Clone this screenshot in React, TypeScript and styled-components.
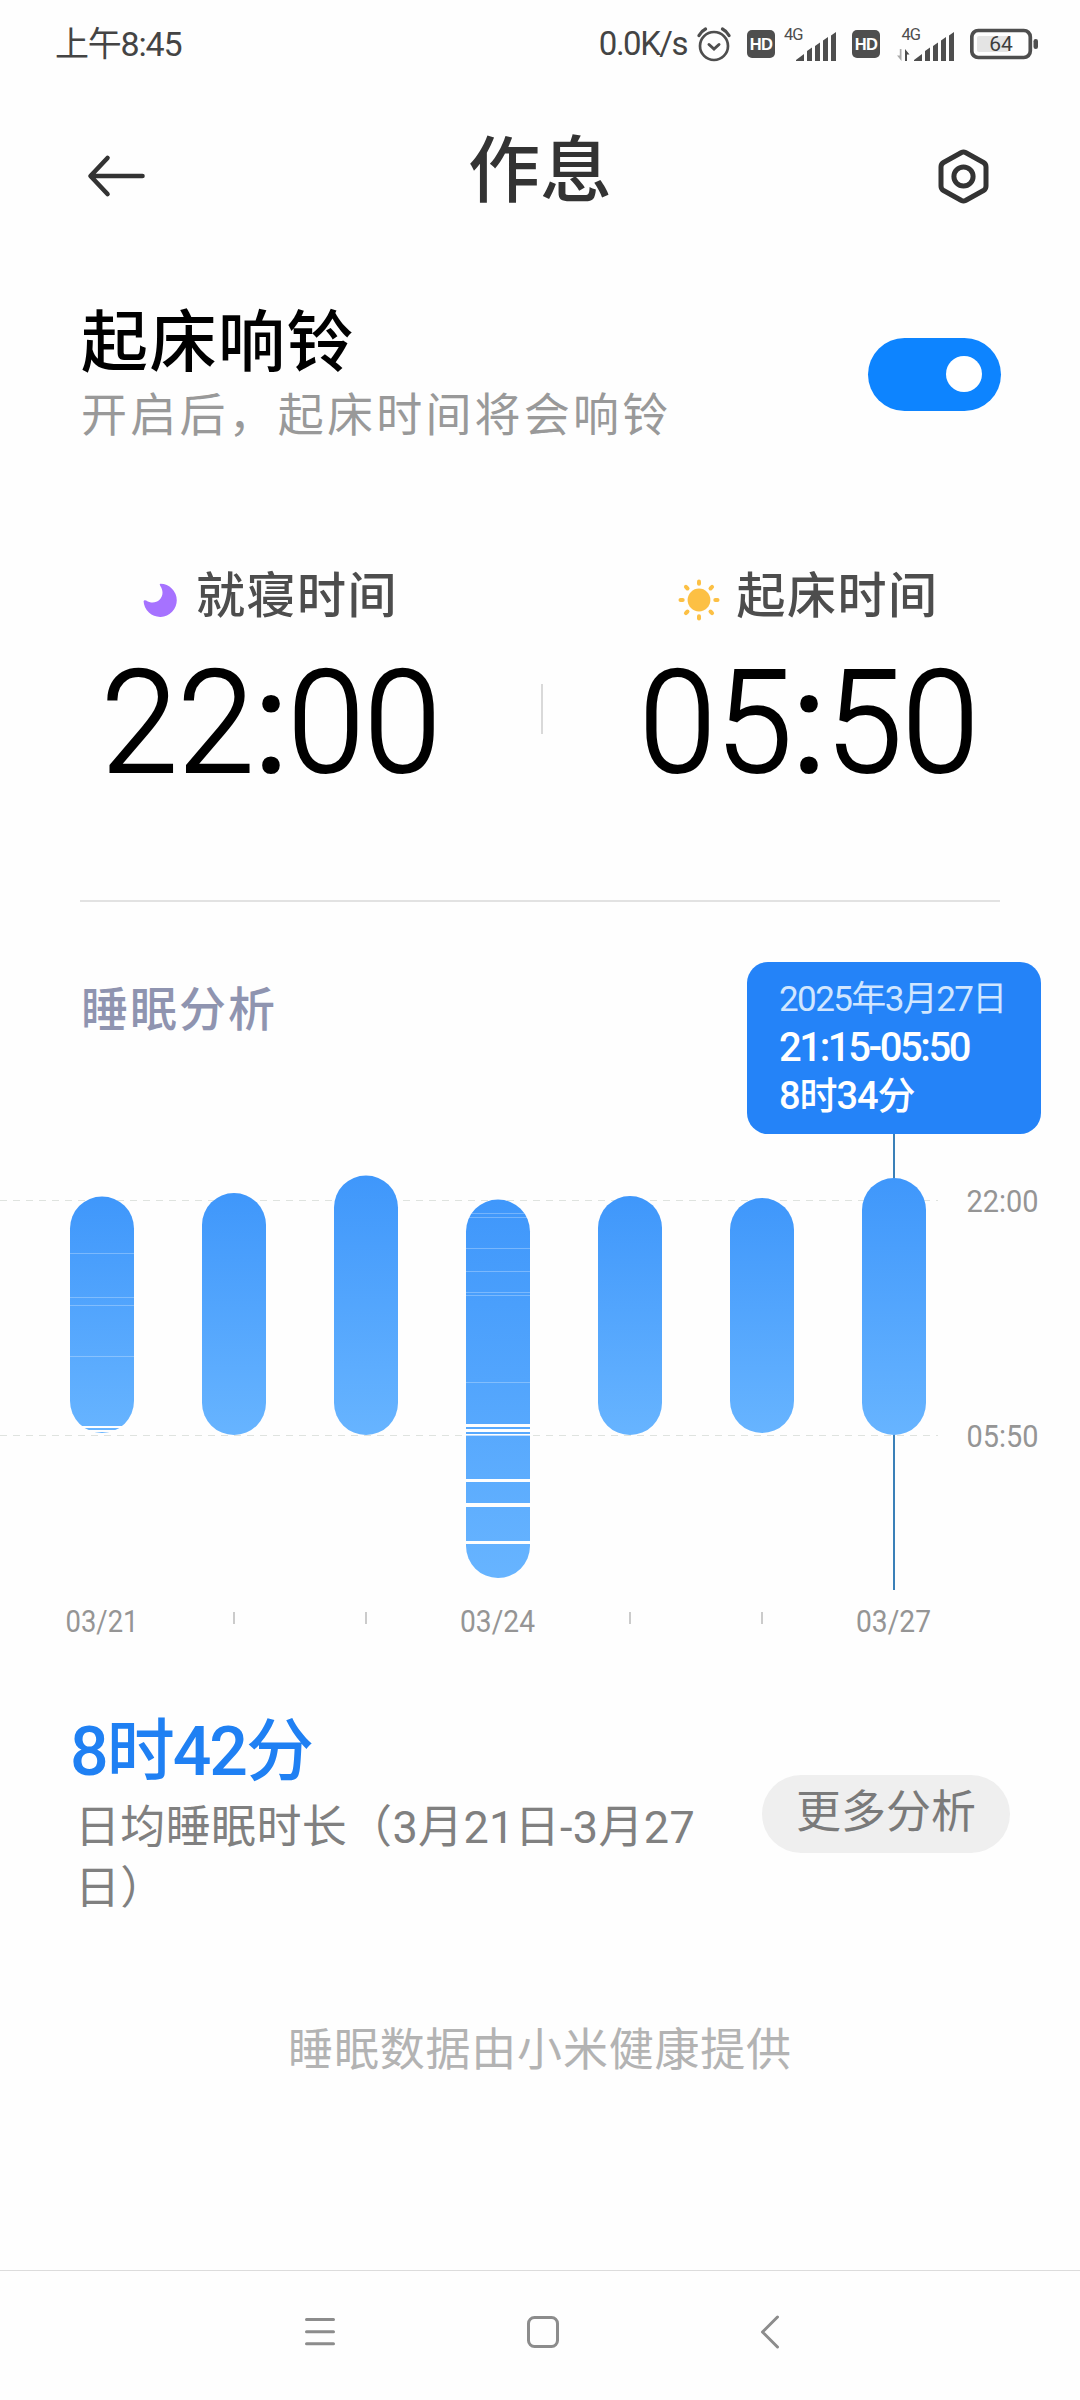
import React from "react";
import styled, { createGlobalStyle } from "styled-components";

const FONT = `Roboto, "Noto Sans CJK SC", sans-serif`;

const GlobalStyle = createGlobalStyle`
  * { box-sizing: border-box; }
  body { margin: 0; background: #fefefe; }
`;

const Screen = styled.main`
  width: 1080px;
  height: 2400px;
  display: flex;
  flex-direction: column;
  background: #fefefe;
  font-family: ${FONT};
  overflow: hidden;
`;

const Label = styled.span<{ $size: number; $line: number; $color: string; $weight?: number; $track?: number }>`
  display: block;
  white-space: nowrap;
  font-size: ${(p) => p.$size}px;
  line-height: ${(p) => p.$line}px;
  color: ${(p) => p.$color};
  font-weight: ${(p) => p.$weight ?? 400};
  letter-spacing: ${(p) => p.$track ?? 0}px;
`;

/* ---------- status bar ---------- */

const StatusBar = styled.header`
  height: 88px;
  padding: 0 42px 0 55px;
  display: flex;
  align-items: center;
  justify-content: space-between;
`;

const StatusIcons = styled.div`
  display: flex;
  align-items: center;
`;

const StatusItem = styled.div<{ $before: number }>`
  display: flex;
  margin-left: ${(p) => p.$before}px;
`;

const AlarmIcon = () => (
  <svg width="34" height="36" viewBox="0 0 34 36" fill="none" stroke="#4e4e4e" strokeWidth="2.7" strokeLinecap="round">
    <circle cx="17" cy="20" r="14" />
    <path d="M12 18.5l5 4.5 5-4.5" strokeWidth="3" />
    <path d="M2 9.5Q4.500 5 8.500 3M32 9.500Q29.500 5 25.500 3" strokeWidth="3.200" />
  </svg>
);

const HdBadge = styled.span`
  width: 28px;
  height: 28px;
  border-radius: 5px;
  background: #4e4e4e;
  color: #fefefe;
  font: 700 16.5px/29px "Liberation Sans", Arial, sans-serif;
  letter-spacing: -0.6px;
  text-align: center;
`;

const SignalIcon = ({ data = false }: { data?: boolean }) => {
  const x = data ? 17 : 12;
  return (
    <svg width={data ? 57 : 52} height="38" viewBox={`0 0 ${data ? 57 : 52} 38`} fill="#4e4e4e">
      <text x={data ? 4.5 : 0} y="14.500" fontFamily={FONT} fontSize="16.500" letterSpacing="-1">
        4G
      </text>
      <path d={`M${x} 36v-1l8-6v7zM${x + 11} 36V26l5-3.500V36zM${x + 19} 36V21l5-3.500V36zM${x + 27} 36V15.500l5-3.500V36zM${x + 35} 36V10.500l5-3.500V36z`} />
      {data && (
        <>
          <path d="M4.500 24v12L0 30.500h2.800V24z" fill="#aaa" />
          <path d="M8 36V24l4.500 5.500H10V36z" />
        </>
      )}
    </svg>
  );
};

const BatteryIcon = () => (
  <svg width="68" height="32" viewBox="0 0 68 32">
    <rect x="1.800" y="2.500" width="58.500" height="27" rx="6.500" fill="none" stroke="#4e4e4e" strokeWidth="3.700" />
    <rect x="7" y="8" width="32" height="16" rx="2" fill="#e4e4e4" />
    <rect x="63.500" y="11" width="4.500" height="10" rx="2.200" fill="#4e4e4e" />
    <text x="31" y="23" textAnchor="middle" fontFamily={FONT} fontSize="21" fill="#3c3c3c">
      64
    </text>
  </svg>
);

/* ---------- title bar ---------- */

const TitleBar = styled.div`
  height: 176px;
  padding: 0 91px 0 87px;
  display: flex;
  align-items: center;
  justify-content: space-between;
`;

const TitleText = styled.h1`
  margin: 0;
  padding-bottom: 9px;
  font-size: 72px;
  line-height: 90px;
  font-weight: 500;
  color: #333;
`;

const BackIcon = () => (
  <svg width="60" height="44" viewBox="0 0 60 44" fill="none" stroke="#333" strokeWidth="4.600" strokeLinecap="round" strokeLinejoin="round">
    <path d="M55.500 22H4M20.500 4L3.500 22l17 18" />
  </svg>
);

const SettingsIcon = () => (
  <svg width="56" height="56" viewBox="0 0 56 56" fill="none" stroke="#333" strokeWidth="5" strokeLinejoin="round">
    <path d="M10.500 14.500L28.500 4.500Q30.500 3.400 32.500 4.500L50.500 14.500Q53 16 53 19V38Q53 41 50.500 42.500L32.500 52.500Q30.500 53.500 28.500 52.500L10.500 42.500Q8 41 8 38V19Q8 16 10.500 14.500z" />
    <circle cx="30.500" cy="28.500" r="9.600" />
  </svg>
);

/* ---------- alarm switch ---------- */

const AlarmRow = styled.section`
  height: 148px;
  margin-top: 36px;
  padding: 0 79px 0 81px;
  display: flex;
  align-items: center;
  justify-content: space-between;
`;

const AlarmText = styled.div`
  height: 148px;
  padding-top: 2px;
`;

const Toggle = styled.button`
  width: 133px;
  height: 73px;
  padding: 0 19px;
  border: 0;
  border-radius: 37px;
  background: #0d84ff;
  display: flex;
  align-items: center;
  justify-content: flex-end;
`;

const Knob = styled.span`
  width: 36px;
  height: 36px;
  border-radius: 50%;
  background: #fff;
`;

/* ---------- bed / wake times ---------- */

const Times = styled.section`
  height: 240px;
  margin-top: 112px;
  display: grid;
  grid-template-columns: 541px 2px 531px;
`;

const TimeColumn = styled.div`
  padding-top: 2px;
  display: flex;
  flex-direction: column;
  align-items: center;
`;

const TimeLabel = styled.div`
  height: 70px;
  display: flex;
  align-items: center;
`;

const IconSlot = styled.span<{ $gap: number }>`
  display: flex;
  padding-top: 6px;
  margin-right: ${(p) => p.$gap}px;
`;

const TimeValue = styled.div`
  margin-top: 14px;
  font-size: 143px;
  line-height: 154px;
  font-weight: 300;
  color: #000;
  -webkit-text-stroke: 2.2px #000;
  transform: scaleX(0.965);
`;

const Colon = styled.span`
  font-weight: 400;
`;

const TimeDivider = styled.div`
  height: 50px;
  margin-top: 124px;
  background: #d9d9d9;
`;

const Rule = styled.hr`
  width: 920px;
  height: 2px;
  margin: 100px 0 0 80px;
  border: 0;
  background: #e2e2e2;
`;

const MoonIcon = () => (
  <svg width="34" height="34" viewBox="0 0 34 34" fill="#a672ff">
    <path d="M17.500.700A16.600 16.600 0 1 1 .600 18.200Q.900 16.600 3.200 17.400C13 24 24.500 13.500 17.200 2.800Q16.200.600 17.500.700z" />
  </svg>
);

const SunIcon = () => (
  <svg width="42" height="42" viewBox="0 0 42 42" fill="#fcc044" stroke="#fcc044" strokeWidth="4" strokeLinecap="round">
    <circle cx="21" cy="21" r="11.400" stroke="none" />
    {[0, 45, 90, 135, 180, 225, 270, 315].map((a) => (
      <path key={a} d="M21 2.500v2.200" transform={`rotate(${a} 21 21)`} />
    ))}
  </svg>
);

/* ---------- analysis ---------- */

const Analysis = styled.section`
  position: relative;
  height: 738px;
  padding-top: 228px;
`;

const AnalysisTitle = styled.h2`
  position: absolute;
  left: 81px;
  top: 73px;
  margin: 0;
  font-size: 47px;
  line-height: 70px;
  letter-spacing: 2px;
  font-weight: 500;
  color: #8f94b0;
`;

const Tooltip = styled.div`
  position: absolute;
  left: 747px;
  top: 60px;
  width: 294px;
  height: 172px;
  padding: 13px 0 0 32px;
  border-radius: 21px;
  background: #2483f8;
`;

const BAR_W = 64;
const TOP = 1130;

type Night = { x: number; from: number; to: number; faint?: number[]; gaps?: [number, number][] };

const nights: Night[] = [
  { x: 102, from: 1196.5, to: 1433, faint: [1253, 1297, 1305, 1356], gaps: [[1426, 2], [1430, 2]] },
  { x: 234, from: 1193, to: 1435 },
  { x: 366, from: 1175.5, to: 1435 },
  {
    x: 498,
    from: 1199.5,
    to: 1578,
    faint: [1213, 1217, 1248, 1271, 1292, 1295, 1382],
    gaps: [[1424, 3], [1429, 3], [1434, 1.6], [1479, 3], [1503, 4], [1541, 3]],
  },
  { x: 630, from: 1196, to: 1435 },
  { x: 762, from: 1198, to: 1433 },
  { x: 894, from: 1178, to: 1435 },
];

const AxisText = ({ x, y, w, children }: { x: number; y: number; w: number; children: string }) => (
  <text x={x - w / 2} y={y - TOP} fontFamily={FONT} fontSize="31" fill="#959595" textLength={w} lengthAdjust="spacingAndGlyphs">
    {children}
  </text>
);

const SleepChart = () => (
  <svg width="1080" height="510" viewBox="0 0 1080 510">
    <defs>
      <linearGradient id="bar" x1="0" y1="0" x2="0" y2="1">
        <stop offset="0" stopColor="#3f97fb" />
        <stop offset="1" stopColor="#67b4ff" />
      </linearGradient>
    </defs>
    <path d="M0 70.500H938M0 305.500H938" stroke="#dfe3df" strokeWidth="1" strokeDasharray="7 6" />
    <path d="M894 0V460" stroke="#3a80b8" strokeWidth="2" />
    {nights.map((n) => (
      <g key={n.x}>
        <rect x={n.x - BAR_W / 2} y={n.from - TOP} width={BAR_W} height={n.to - n.from} rx={BAR_W / 2} fill="url(#bar)" />
        {n.faint?.map((y) => (
          <rect key={y} x={n.x - BAR_W / 2} y={y - TOP} width={BAR_W} height="1" fill="#fff" opacity="0.28" />
        ))}
        {n.gaps?.map(([y, h]) => (
          <rect key={y} x={n.x - BAR_W / 2} y={y - TOP} width={BAR_W} height={h} fill="#fefefe" />
        ))}
      </g>
    ))}
    <path d="M234 482v12M366 482v12M630 482v12M762 482v12" stroke="#cbcbcb" strokeWidth="2" />
    <AxisText x={1002.5} y={1212} w={72}>22:00</AxisText>
    <AxisText x={1002.5} y={1447} w={72}>05:50</AxisText>
    <AxisText x={102} y={1631.5} w={73}>03/21</AxisText>
    <AxisText x={497.5} y={1631.5} w={75}>03/24</AxisText>
    <AxisText x={893.5} y={1631.5} w={75}>03/27</AxisText>
  </svg>
);

/* ---------- summary ---------- */

const Summary = styled.section`
  height: 210px;
  margin-top: 69px;
  padding: 0 70px;
  display: flex;
  align-items: center;
  justify-content: space-between;
`;

const SummaryText = styled.div`
  width: 646px;
  padding-top: 3px;
`;

const Description = styled.p`
  margin: 5px 0 0 5px;
  font-size: 45px;
  line-height: 61px;
  letter-spacing: 0.35px;
  color: #808080;
`;

const MoreButton = styled.button`
  width: 248px;
  height: 78px;
  padding: 0 0 2px;
  border: 0;
  border-radius: 39px;
  background: #efefef;
  color: #7a7a7a;
  font: 400 45px/76px ${FONT};
`;

const Source = styled.p`
  margin: 97px 0 0;
  text-align: center;
  font-size: 45px;
  line-height: 70px;
  letter-spacing: 0.8px;
  color: #b3b3b3;
`;

const NavBar = styled.nav`
  height: 130px;
  margin-top: auto;
  padding: 42px 0 0 300px;
  border-top: 1px solid #dcdcdc;
  display: flex;
  gap: 183px;
`;

const NavIcon = styled.svg`
  width: 40px;
  height: 40px;
  fill: none;
  stroke: #8c8c8c;
  stroke-width: 3;
  stroke-linecap: round;
  stroke-linejoin: round;
`;

export default function App() {
  return (
    <>
      <GlobalStyle />
      <Screen>
        <StatusBar>
          <Label $size={34} $line={88} $color="#444" $track={-1.2}>上午8:45</Label>
          <StatusIcons>
            <Label $size={33} $line={88} $color="#444" $track={-1.5}>0.0K/s</Label>
            <StatusItem $before={10}><AlarmIcon /></StatusItem>
            <StatusItem $before={16}><HdBadge>HD</HdBadge></StatusItem>
            <StatusItem $before={9}><SignalIcon /></StatusItem>
            <StatusItem $before={16}><HdBadge>HD</HdBadge></StatusItem>
            <StatusItem $before={17}><SignalIcon data /></StatusItem>
            <StatusItem $before={16}><BatteryIcon /></StatusItem>
          </StatusIcons>
        </StatusBar>

        <TitleBar>
          <BackIcon />
          <TitleText>作息</TitleText>
          <SettingsIcon />
        </TitleBar>

        <AlarmRow>
          <AlarmText>
            <Label $size={67} $line={82} $color="#000" $weight={500} $track={1.5}>起床响铃</Label>
            <Label $size={46} $line={62} $color="#999" $track={3.2}>开启后，起床时间将会响铃</Label>
          </AlarmText>
          <Toggle aria-label="起床响铃"><Knob /></Toggle>
        </AlarmRow>

        <Times>
          <TimeColumn>
            <TimeLabel>
              <IconSlot $gap={19}><MoonIcon /></IconSlot>
              <Label $size={49} $line={70} $color="#4d4d4d" $weight={500} $track={1.5}>就寝时间</Label>
            </TimeLabel>
            <TimeValue>22<Colon>:</Colon>00</TimeValue>
          </TimeColumn>
          <TimeDivider />
          <TimeColumn>
            <TimeLabel>
              <IconSlot $gap={16}><SunIcon /></IconSlot>
              <Label $size={49} $line={70} $color="#4d4d4d" $weight={500} $track={1.5}>起床时间</Label>
            </TimeLabel>
            <TimeValue>05<Colon>:</Colon>50</TimeValue>
          </TimeColumn>
        </Times>

        <Rule />

        <Analysis>
          <AnalysisTitle>睡眠分析</AnalysisTitle>
          <SleepChart />
          <Tooltip>
            <Label $size={35} $line={49} $color="#d0e6ff" $track={-1.6}>2025年3月27日</Label>
            <Label $size={40} $line={48} $color="#fff" $track={-2.4} $weight={500}>21:15-05:50</Label>
            <Label $size={38} $line={49} $color="#fff" $track={-1.1} $weight={500}>8时34分</Label>
          </Tooltip>
        </Analysis>

        <Summary>
          <SummaryText>
            <Label $size={68} $line={80} $color="#1f80f3" $weight={500} $track={-2}>8时42分</Label>
            <Description>日均睡眠时长（3月21日-3月27日）</Description>
          </SummaryText>
          <MoreButton>更多分析</MoreButton>
        </Summary>

        <Source>睡眠数据由小米健康提供</Source>

        <NavBar>
          <NavIcon viewBox="0 0 40 40"><path d="M6.500 6.500h27M6.500 18.700h27M6.500 30.800h27" /></NavIcon>
          <NavIcon viewBox="0 0 40 40"><rect x="5.500" y="4.500" width="29" height="29" rx="6" /></NavIcon>
          <NavIcon viewBox="0 0 40 40"><path d="M31.500 4L16.500 19l15 15" /></NavIcon>
        </NavBar>
      </Screen>
    </>
  );
}
